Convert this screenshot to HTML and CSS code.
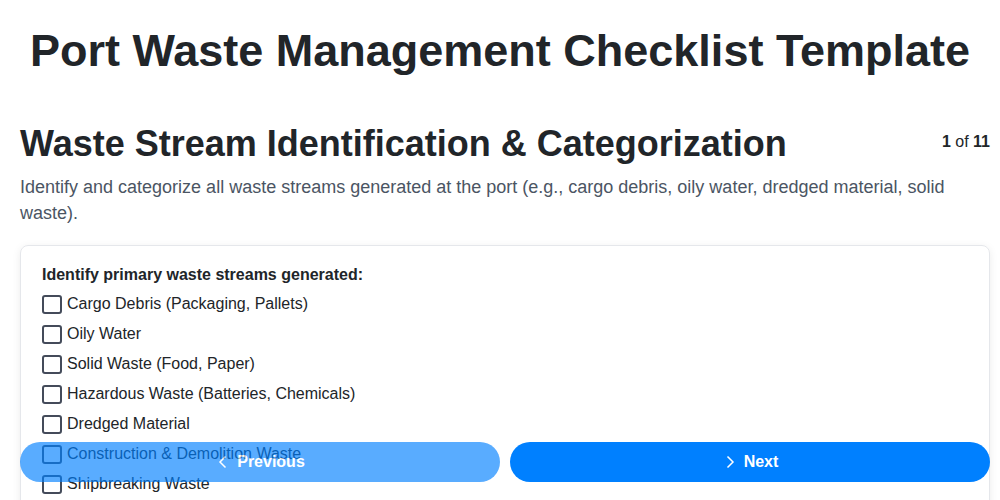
FILE: index.html
```html
<!DOCTYPE html>
<html lang="en">
<head>
<meta charset="utf-8">
<title>Port Waste Management Checklist Template</title>
<link rel="stylesheet" href="styles.css">
</head>
<body>
<div class="page">
  <h1 class="title">Port Waste Management Checklist Template</h1>
  <div class="section-head">
    <h2 class="section-title">Waste Stream Identification &amp; Categorization</h2>
    <div class="counter"><b>1</b> of <b>11</b></div>
  </div>
  <p class="desc">Identify and categorize all waste streams generated at the port (e.g., cargo debris, oily water, dredged material, solid waste).</p>
  <div class="card">
    <div class="q-label">Identify primary waste streams generated:</div>
    <ul class="checks">
      <li class="check"><span class="box"></span><span>Cargo Debris (Packaging, Pallets)</span></li>
      <li class="check"><span class="box"></span><span>Oily Water</span></li>
      <li class="check"><span class="box"></span><span>Solid Waste (Food, Paper)</span></li>
      <li class="check"><span class="box"></span><span>Hazardous Waste (Batteries, Chemicals)</span></li>
      <li class="check"><span class="box"></span><span>Dredged Material</span></li>
      <li class="check"><span class="box"></span><span>Construction &amp; Demolition Waste</span></li>
      <li class="check"><span class="box"></span><span>Shipbreaking Waste</span></li>
      <li class="check"><span class="box"></span><span>Sewage</span></li>
      <li class="check"><span class="box"></span><span>Other</span></li>
    </ul>
  </div>
</div>
<nav class="nav">
  <button class="btn btn-prev" disabled>
    <svg class="chev" viewBox="0 0 16 16" width="16" height="16"><path d="M10.5 2.5 L5 8 L10.5 13.5" fill="none" stroke="currentColor" stroke-width="1.5"/></svg>
    <span>Previous</span>
  </button>
  <button class="btn btn-next">
    <svg class="chev" viewBox="0 0 16 16" width="16" height="16"><path d="M5.5 2.5 L11 8 L5.5 13.5" fill="none" stroke="currentColor" stroke-width="1.5"/></svg>
    <span>Next</span>
  </button>
</nav>
</body>
</html>
```
FILE: styles.css
```css
* { box-sizing: border-box; }
html, body { margin: 0; padding: 0; background: #fff; }
body {
  font-family: "Liberation Sans", Arial, sans-serif;
  color: #212529;
}
.page {
  padding: 0 10px 0 20px;
}
.title {
  margin: 0 0 0 -10px;
  padding-top: 24px;
  font-size: 45px;
  line-height: 54px;
  font-weight: 700;
  text-align: center;
  color: #212529;
}
.section-head {
  display: flex;
  justify-content: space-between;
  align-items: flex-start;
  margin-top: 44px;
}
.section-title {
  margin: 0;
  font-size: 36px;
  line-height: 44px;
  font-weight: 700;
  color: #212529;
}
.counter {
  font-size: 16px;
  line-height: 20px;
  margin-top: 10px;
  color: #212529;
}
.desc {
  margin: 8px 0 0;
  font-size: 18px;
  line-height: 26px;
  color: #4b5563;
}
.card {
  margin-top: 19px;
  border: 1px solid #e5e7eb;
  border-radius: 8px;
  box-shadow: 0 2px 8px rgba(0,0,0,0.08);
  padding: 19px 21px 20px;
}
.q-label {
  font-size: 16px;
  font-weight: 700;
  line-height: 20px;
  margin-bottom: 4px;
}
.checks { list-style: none; margin: 0; padding: 0; }
.check {
  display: flex;
  align-items: center;
  gap: 5px;
  height: 30px;
  font-size: 16px;
  color: #212529;
}
.box {
  width: 20px;
  height: 19px;
  border: 2px solid #444b5a;
  border-radius: 3px;
  flex: none;
}
.nav {
  position: fixed;
  left: 20px;
  right: 10px;
  bottom: 18px;
  display: flex;
  gap: 10px;
}
.btn {
  flex: 1;
  height: 40px;
  border: none;
  border-radius: 20px;
  background: #0080ff;
  color: #fff;
  font-family: "Liberation Sans", Arial, sans-serif;
  font-size: 16px;
  font-weight: 700;
  display: flex;
  align-items: center;
  justify-content: center;
  gap: 6px;
  padding: 0;
}
.btn-prev { opacity: 0.65; }
.chev { display: block; }
```
